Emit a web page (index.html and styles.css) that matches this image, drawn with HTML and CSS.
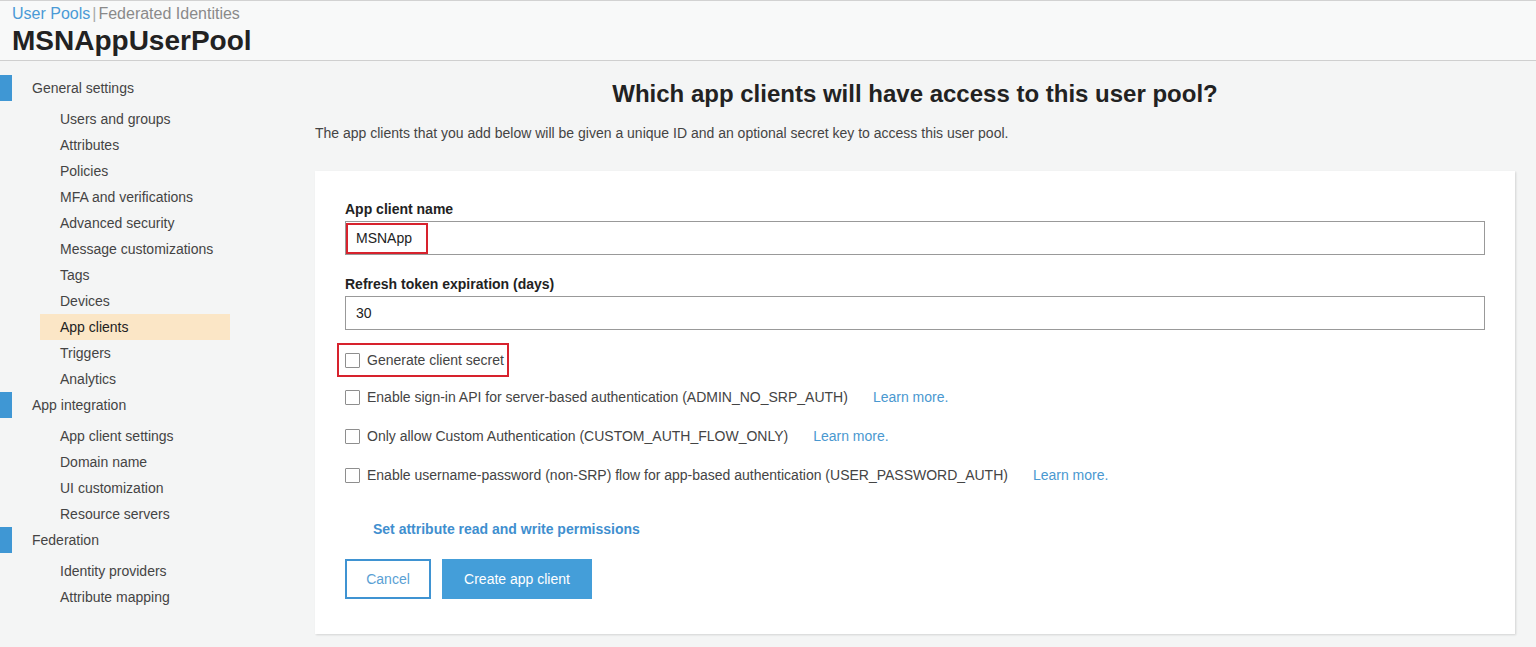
FILE: index.html
```html
<!DOCTYPE html>
<html lang="en">
<head>
<meta charset="utf-8">
<title>MSNAppUserPool - App clients</title>
<link rel="stylesheet" href="styles.css">
</head>
<body>
<header class="top">
  <div class="crumbs"><a class="crumb-active" href="#">User Pools</a><span class="sep">|</span><a class="crumb" href="#">Federated Identities</a></div>
  <h1 class="pool">MSNAppUserPool</h1>
</header>
<div class="layout">
  <nav class="side">
    <div class="sec"><span class="mark"></span><span class="sec-label">General settings</span></div>
    <ul class="items">
      <li class="item">Users and groups</li>
      <li class="item">Attributes</li>
      <li class="item">Policies</li>
      <li class="item">MFA and verifications</li>
      <li class="item">Advanced security</li>
      <li class="item">Message customizations</li>
      <li class="item">Tags</li>
      <li class="item">Devices</li>
      <li class="item active">App clients</li>
      <li class="item">Triggers</li>
      <li class="item">Analytics</li>
    </ul>
    <div class="sec"><span class="mark"></span><span class="sec-label">App integration</span></div>
    <ul class="items">
      <li class="item">App client settings</li>
      <li class="item">Domain name</li>
      <li class="item">UI customization</li>
      <li class="item">Resource servers</li>
    </ul>
    <div class="sec"><span class="mark"></span><span class="sec-label">Federation</span></div>
    <ul class="items">
      <li class="item">Identity providers</li>
      <li class="item">Attribute mapping</li>
    </ul>
  </nav>
  <main class="main">
    <h2 class="title">Which app clients will have access to this user pool?</h2>
    <p class="desc">The app clients that you add below will be given a unique ID and an optional secret key to access this user pool.</p>
    <section class="card">
      <label class="lbl">App client name</label>
      <div class="field">
        <span class="val">MSNApp</span>
        <span class="hl hl-name"></span>
      </div>
      <label class="lbl lbl2">Refresh token expiration (days)</label>
      <div class="field"><span class="val">30</span></div>
      <div class="chk chk1">
        <span class="box"></span><span class="chk-text">Generate client secret</span>
        <span class="hl hl-secret"></span>
      </div>
      <div class="chk">
        <span class="box"></span><span class="chk-text">Enable sign-in API for server-based authentication (ADMIN_NO_SRP_AUTH)</span><a class="learn" href="#">Learn more.</a>
      </div>
      <div class="chk">
        <span class="box"></span><span class="chk-text">Only allow Custom Authentication (CUSTOM_AUTH_FLOW_ONLY)</span><a class="learn" href="#">Learn more.</a>
      </div>
      <div class="chk">
        <span class="box"></span><span class="chk-text">Enable username-password (non-SRP) flow for app-based authentication (USER_PASSWORD_AUTH)</span><a class="learn" href="#">Learn more.</a>
      </div>
      <a class="perm" href="#">Set attribute read and write permissions</a>
      <div class="btns">
        <button class="btn btn-cancel">Cancel</button>
        <button class="btn btn-primary">Create app client</button>
      </div>
    </section>
  </main>
</div>
</body>
</html>
```

FILE: styles.css
```css
* { box-sizing: border-box; }
html, body { margin: 0; padding: 0; }
body {
  background: #f4f5f5;
  font-family: "Liberation Sans", Arial, sans-serif;
  font-size: 14px;
  color: #444;
  width: 1536px;
  height: 647px;
  overflow: hidden;
}
a { text-decoration: none; }

.top {
  height: 61px;
  border-top: 1px solid #d2d2d2;
  border-bottom: 1px solid #cfcfcf;
  padding: 4px 12px 0;
  background: #f8f9f9;
}
.crumbs { font-size: 16px; line-height: 18px; height: 18px; }
.crumb-active { color: #4a9ad6; }
.sep { color: #aaa; margin: 0 2px 0 2px; }
.crumb { color: #8a8a8a; }
.pool {
  margin: 0;
  font-size: 28px;
  line-height: 36px;
  font-weight: bold;
  color: #222;
}

.layout { display: flex; }
.side { width: 315px; flex: none; padding-top: 14px; }
.sec { display: flex; align-items: center; height: 26px; }
.mark { width: 12px; height: 26px; background: #3f97d4; }
.sec-label { margin-left: 20px; color: #444; line-height: 26px; }
.items { list-style: none; margin: 5px 0 0; padding: 0; }
.item {
  height: 26px;
  line-height: 26px;
  margin-left: 40px;
  width: 190px;
  padding-left: 20px;
  color: #444;
}
.item.active { background: #fbe6c6; color: #222; }

.main { width: 1200px; flex: none; }
.title {
  margin: 20px 0 0;
  text-align: center;
  font-size: 24px;
  line-height: 26px;
  font-weight: bold;
  color: #222;
}
.desc { margin: 16px 0 0; line-height: 20px; color: #444; }

.card {
  margin-top: 28px;
  background: #fff;
  padding: 29px 30px 36px;
  box-shadow: 1px 1px 2px rgba(0,0,0,0.14);
  height: 463px;
}
.lbl { display: block; font-weight: bold; color: #222; line-height: 18px; margin-bottom: 3px; }
.lbl2 { margin-top: 20px; }
.field {
  position: relative;
  height: 34px;
  border: 1px solid #999;
  padding-left: 10px;
  display: flex;
  align-items: center;
  color: #222;
}
.hl {
  position: absolute;
  border: 2px solid #d7222d;
  pointer-events: none;
}
.hl-name { left: 0; top: 1px; width: 82px; height: 31px; }

.chk {
  position: relative;
  display: flex;
  align-items: center;
  height: 20px;
  margin-bottom: 19px;
}
.chk1 { margin-top: 20px; margin-bottom: 17px; }
.box {
  width: 15px;
  height: 15px;
  border: 1px solid #8e8e8e;
  border-radius: 1px;
  background: #fff;
  flex: none;
}
.chk-text { margin-left: 7px; color: #444; }
.learn { margin-left: 25px; color: #4a98d0; }
.hl-secret { left: -8px; top: -7px; width: 172px; height: 34px; }

.perm {
  display: block;
  margin: 35px 0 0 28px;
  font-weight: bold;
  color: #3f8fcf;
  line-height: 18px;
}
.btns { display: flex; gap: 11px; margin-top: 21px; }
.btn {
  font-family: "Liberation Sans", Arial, sans-serif;
  font-size: 14px;
  height: 40px;
  border-radius: 0;
  cursor: pointer;
}
.btn-cancel {
  width: 86px;
  background: #fff;
  border: 2px solid #3f93d2;
  color: #5a9fd4;
}
.btn-primary {
  width: 150px;
  background: #449ed9;
  border: 0;
  color: #fff;
}
```
